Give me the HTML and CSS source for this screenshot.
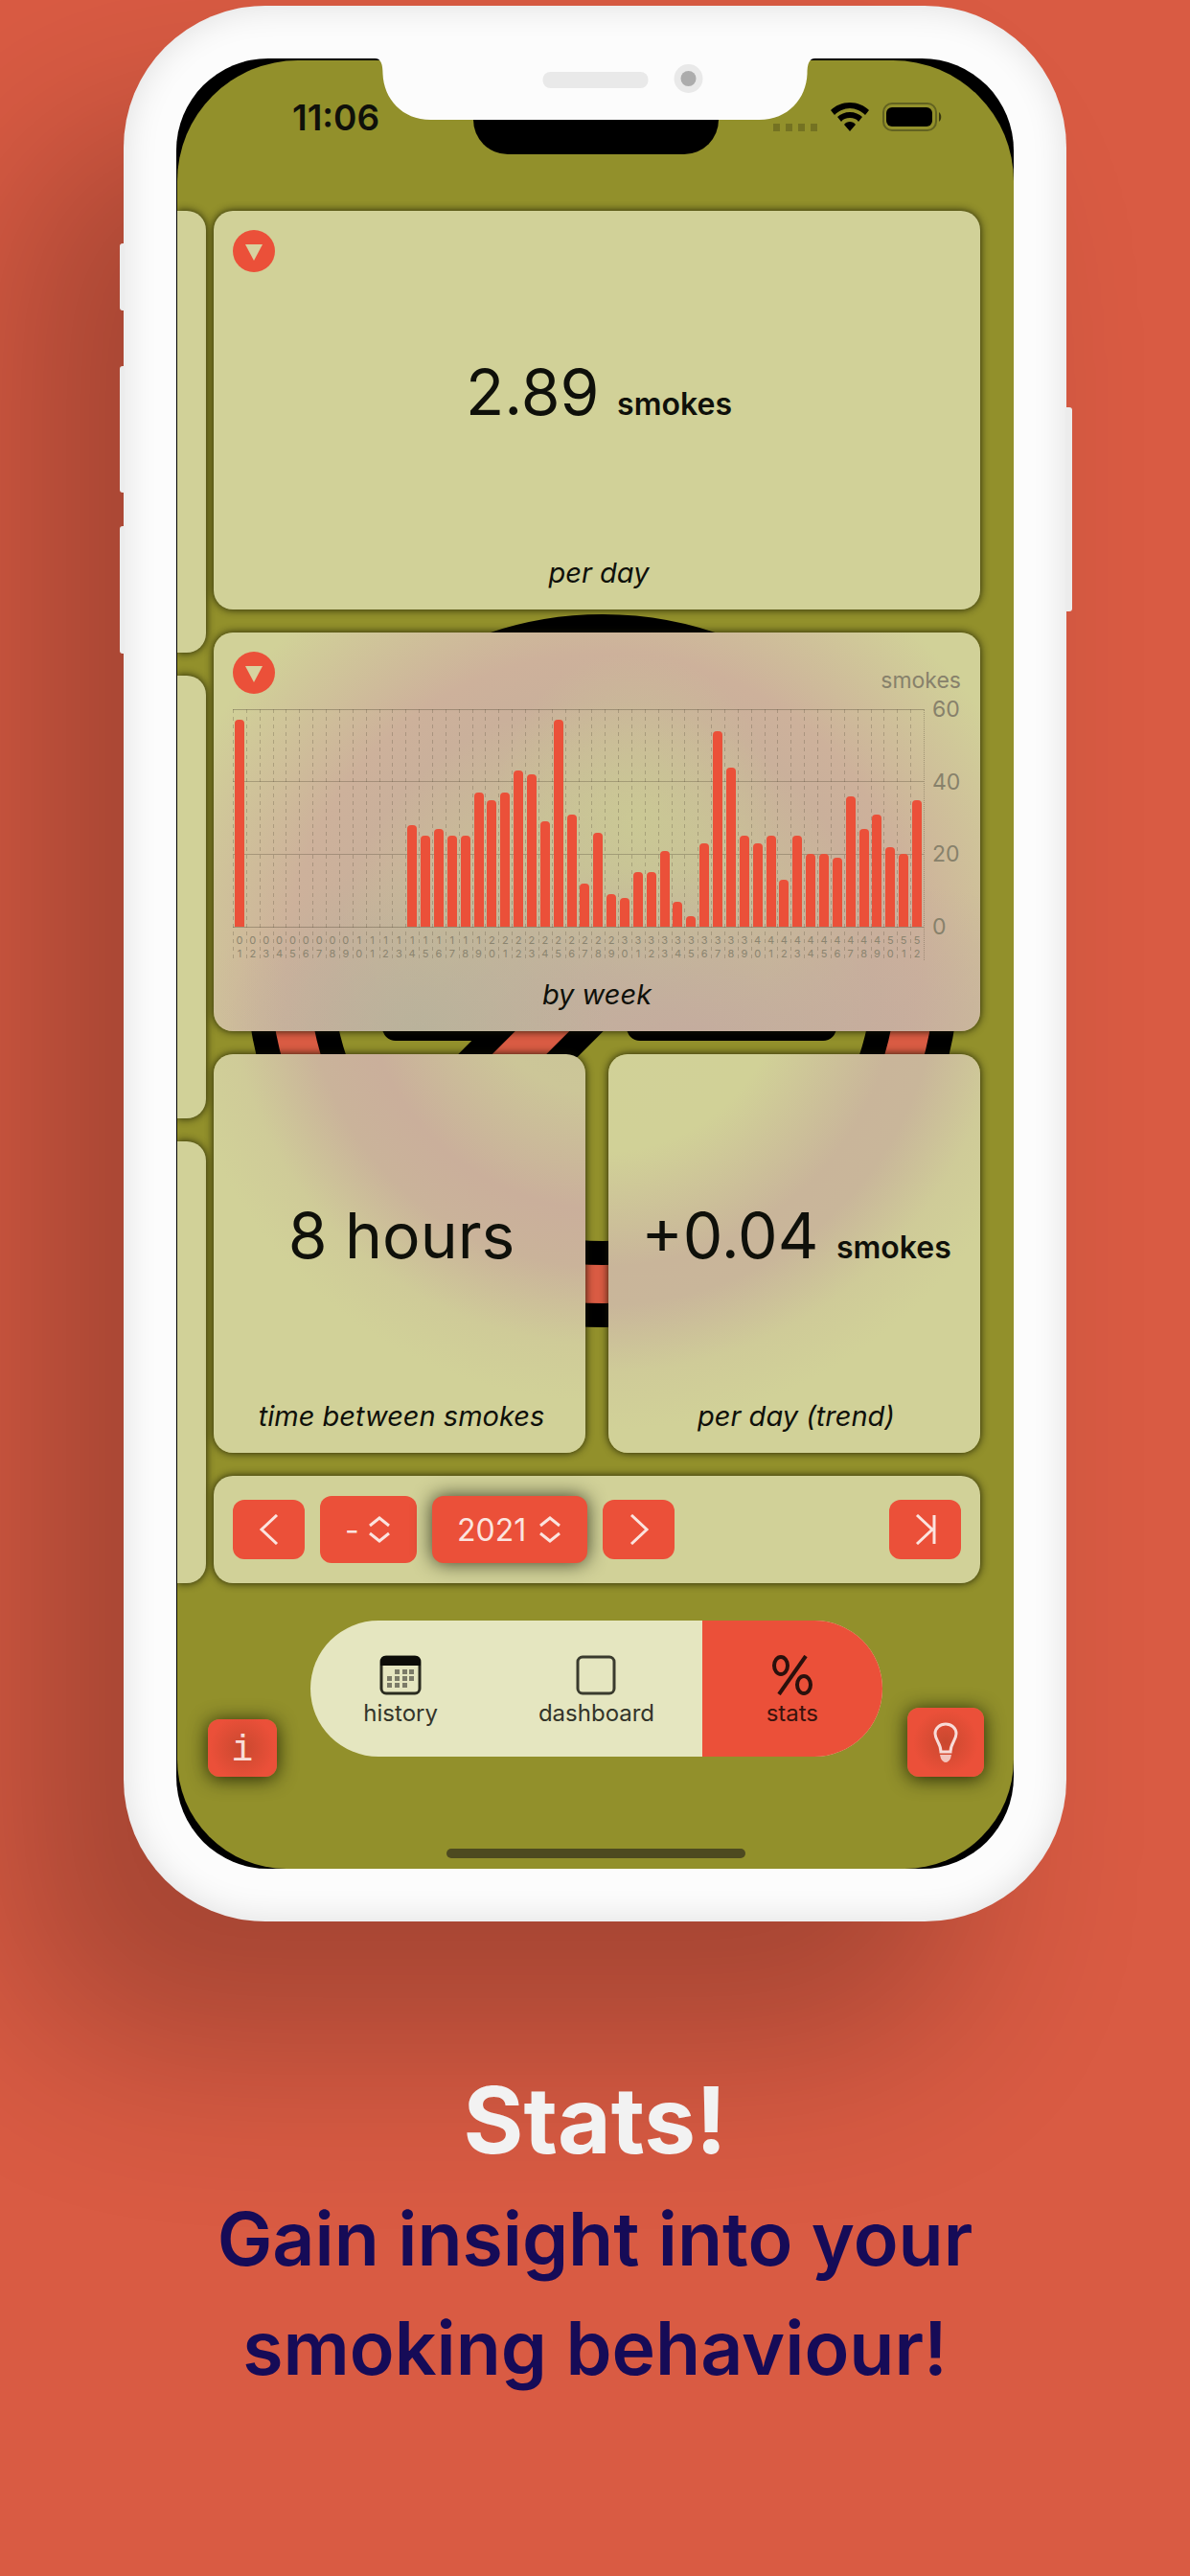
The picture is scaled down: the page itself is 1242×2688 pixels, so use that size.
FILE: index.html
```html
<!DOCTYPE html>
<html lang="en">
<head>
<meta charset="utf-8">
<meta name="viewport" content="width=device-width, initial-scale=1">
<title>Stats</title>
<link rel="stylesheet" href="styles.css">
</head>
<body>
<main class="page">
  <div class="phone">
    <span class="key key-mute"></span>
    <span class="key key-up"></span>
    <span class="key key-down"></span>
    <span class="key key-power"></span>
    <div class="bezel">
      <div class="screen">
        <svg class="sign" viewBox="0 0 744 744" aria-hidden="true">
          <rect x="142" y="360" width="200" height="85" rx="14" fill="#000"/>
          <rect x="397" y="360" width="219" height="85" rx="14" fill="#000"/>
          <g fill="none">
            <path d="M142 602L602 142" stroke="#000" stroke-width="90"/>
            <circle cx="372" cy="372" r="327" stroke="#000" stroke-width="90"/>
            <circle cx="372" cy="372" r="327" stroke="#d95b43" stroke-width="40"/>
            <path d="M142 602L602 142" stroke="#d95b43" stroke-width="40"/>
          </g>
        </svg>

        <header class="status">
          <time class="clock">11:06</time>
          <div class="signals">
            <svg width="46" height="8" viewBox="0 0 46 8" class="cell" aria-hidden="true"><path d="M0 0h7v8H0zM13 0h7v8h-7zM26 0h7v8h-7zM39 0h7v8h-7z"/></svg>
            <svg width="40" height="30" viewBox="0 0 40 30" class="wifi" aria-hidden="true"><path d="M20 0C12 0 5 3 0 8l4 5c4-4 10-7 16-7s12 3 16 7l4-5C35 3 28 0 20 0zM20 10c-5 0-10 2-13 5l4 5c2-3 5-4 9-4s7 1 9 4l4-5c-3-3-8-5-13-5zM20 20c-2 0-5 1-6 3l6 7 6-7c-1-2-4-3-6-3z"/></svg>
            <svg width="62" height="30" viewBox="0 0 62 30" aria-hidden="true"><rect x="1" y="1" width="55" height="28" rx="9" fill="none" stroke="#4f4e1c" stroke-width="2" opacity=".7"/><rect x="4" y="5" width="48" height="20" rx="6"/><path d="M59 10c3 2 3 8 0 10z" opacity=".6"/></svg>
          </div>
        </header>

        <div class="board">
          <div class="prev-page" aria-hidden="true"><div></div><div></div><div></div></div>
          <div class="cards">
            <section class="card wide">
              <button class="disclose" aria-label="Options"><svg viewBox="0 0 44 44"><path d="M13 15h18L22 32z"/></svg></button>
              <p class="value">2.89 <small>smokes</small></p>
              <h2 class="caption">per day</h2>
            </section>

            <section class="card wide weekly">
              <div class="chart-head">
                <button class="disclose" aria-label="Options"><svg viewBox="0 0 44 44"><path d="M13 15h18L22 32z"/></svg></button>
                <span class="unit">smokes</span>
              </div>
              <div class="chart">
                <ol class="bars">
                  <li style="--v:57"><b></b><span>01</span></li>
                  <li style="--v:0"><b></b><span>02</span></li>
                  <li style="--v:0"><b></b><span>03</span></li>
                  <li style="--v:0"><b></b><span>04</span></li>
                  <li style="--v:0"><b></b><span>05</span></li>
                  <li style="--v:0"><b></b><span>06</span></li>
                  <li style="--v:0"><b></b><span>07</span></li>
                  <li style="--v:0"><b></b><span>08</span></li>
                  <li style="--v:0"><b></b><span>09</span></li>
                  <li style="--v:0"><b></b><span>10</span></li>
                  <li style="--v:0"><b></b><span>11</span></li>
                  <li style="--v:0"><b></b><span>12</span></li>
                  <li style="--v:0"><b></b><span>13</span></li>
                  <li style="--v:28"><b></b><span>14</span></li>
                  <li style="--v:25"><b></b><span>15</span></li>
                  <li style="--v:27"><b></b><span>16</span></li>
                  <li style="--v:25"><b></b><span>17</span></li>
                  <li style="--v:25"><b></b><span>18</span></li>
                  <li style="--v:37"><b></b><span>19</span></li>
                  <li style="--v:35"><b></b><span>20</span></li>
                  <li style="--v:37"><b></b><span>21</span></li>
                  <li style="--v:43"><b></b><span>22</span></li>
                  <li style="--v:42"><b></b><span>23</span></li>
                  <li style="--v:29"><b></b><span>24</span></li>
                  <li style="--v:57"><b></b><span>25</span></li>
                  <li style="--v:31"><b></b><span>26</span></li>
                  <li style="--v:12"><b></b><span>27</span></li>
                  <li style="--v:26"><b></b><span>28</span></li>
                  <li style="--v:9"><b></b><span>29</span></li>
                  <li style="--v:8"><b></b><span>30</span></li>
                  <li style="--v:15"><b></b><span>31</span></li>
                  <li style="--v:15"><b></b><span>32</span></li>
                  <li style="--v:21"><b></b><span>33</span></li>
                  <li style="--v:7"><b></b><span>34</span></li>
                  <li style="--v:3"><b></b><span>35</span></li>
                  <li style="--v:23"><b></b><span>36</span></li>
                  <li style="--v:54"><b></b><span>37</span></li>
                  <li style="--v:44"><b></b><span>38</span></li>
                  <li style="--v:25"><b></b><span>39</span></li>
                  <li style="--v:23"><b></b><span>40</span></li>
                  <li style="--v:25"><b></b><span>41</span></li>
                  <li style="--v:13"><b></b><span>42</span></li>
                  <li style="--v:25"><b></b><span>43</span></li>
                  <li style="--v:20"><b></b><span>44</span></li>
                  <li style="--v:20"><b></b><span>45</span></li>
                  <li style="--v:19"><b></b><span>46</span></li>
                  <li style="--v:36"><b></b><span>47</span></li>
                  <li style="--v:27"><b></b><span>48</span></li>
                  <li style="--v:31"><b></b><span>49</span></li>
                  <li style="--v:22"><b></b><span>50</span></li>
                  <li style="--v:20"><b></b><span>51</span></li>
                  <li style="--v:35"><b></b><span>52</span></li>
                </ol>
                <div class="axis"><span>60</span><span>40</span><span>20</span><span>0</span></div>
              </div>
              <h2 class="caption">by week</h2>
            </section>

            <section class="card between">
              <p class="value">8 hours</p>
              <h2 class="caption">time between smokes</h2>
            </section>
            <section class="card trend">
              <p class="value">+0.04 <small>smokes</small></p>
              <h2 class="caption">per day (trend)</h2>
            </section>

            <form class="period wide">
              <button type="button" class="step" aria-label="Previous"><svg viewBox="0 0 32 32"><path d="M24 1L8 16l16 15"/></svg></button>
              <label class="pick pick-month"><select aria-label="Month"><option>-</option></select><svg viewBox="0 0 24 28"><path d="M2 10l10-8 10 8M2 18l10 8 10-8"/></svg></label>
              <label class="pick pick-year"><select aria-label="Year"><option>2021</option></select><svg viewBox="0 0 24 28"><path d="M2 10l10-8 10 8M2 18l10 8 10-8"/></svg></label>
              <button type="button" class="step" aria-label="Next"><svg viewBox="0 0 32 32"><path d="M8 1l16 15L8 31"/></svg></button>
              <button type="button" class="step last" aria-label="Latest"><svg viewBox="0 0 32 32"><path d="M7 1l16 15L7 31M25 1v30"/></svg></button>
            </form>
          </div>
        </div>

        <div class="dock">
          <button class="float info" aria-label="Information">i</button>
          <nav class="tabs">
            <a href="#history">
              <svg width="44" height="42" viewBox="0 0 44 42"><rect x="2" y="2" width="40" height="38" rx="5" fill="none" stroke="#2b2c20" stroke-width="3"/><path d="M1 11V6a5 5 0 015-5h32a5 5 0 015 5v5z" fill="#0c0c08"/><g fill="#7b7b68"><path d="M16 15h5v5h-5zM24 15h5v5h-5zM31 15h5v5h-5zM8 22h5v5H8zM16 22h5v5h-5zM24 22h5v5h-5zM31 22h5v5h-5zM8 29h5v5H8zM16 29h5v5h-5zM24 29h5v5h-5z"/></g></svg>
              <span>history</span>
            </a>
            <a href="#dashboard">
              <svg width="44" height="42" viewBox="0 0 44 42"><rect x="3" y="2" width="38" height="38" rx="5" fill="none" stroke="#3a3b2e" stroke-width="3"/></svg>
              <span>dashboard</span>
            </a>
            <a href="#stats" class="current" aria-current="page">
              <svg width="44" height="42" viewBox="0 0 44 42" fill="none" stroke="#2a100c" stroke-width="4"><ellipse cx="10" cy="11" rx="7" ry="9"/><ellipse cx="34" cy="31" rx="7" ry="9"/><path d="M36 1L8 41"/></svg>
              <span>stats</span>
            </a>
          </nav>
          <button class="float tip" aria-label="Tips"><svg width="26" height="42" viewBox="0 0 26 42"><path d="M8 31C8 22 2 19 2 12a11 10 0 0122 0c0 7-6 10-6 19z" fill="none" stroke="#f8dcd8" stroke-width="3"/><path d="M7 34h12l-1 4c-1 2-3 4-5 4s-4-2-5-4z" fill="#f3c4bd"/></svg></button>
        </div>
        <div class="home"></div>

        <div class="island"></div>
      </div>
      <svg class="notch" width="459" height="64" viewBox="0 0 459 64" aria-hidden="true">
        <path d="M0 0C6 0 8 6 8 16C9 42 28 64 58 64H401C431 64 450 42 451 16C451 6 453 0 459 0z" fill="#fcfcfc"/>
        <rect x="175" y="14" width="110" height="17" rx="8" fill="#e9e9e9"/>
        <circle cx="327" cy="21" r="15" fill="#e9e9e9"/><circle cx="327" cy="21" r="8" fill="#acacac"/>
      </svg>
    </div>
  </div>

  <div class="pitch">
    <h1>Stats!</h1>
    <p>Gain insight into your smoking behaviour!</p>
  </div>
</main>
</body>
</html>
```
FILE: styles.css
```css
:root {
  --coral: #d95b43;
  --red: #eb5039;
  --olive: #92902b;
  --cream: #d1d198;
  --edge: 0 0 8px rgba(20, 20, 0, .9);
}

* { box-sizing: border-box; }

body {
  margin: 0;
  background: var(--coral);
  color: #0f100a;
  font-family: Inter, "Liberation Sans", sans-serif;
}

h1, h2, p, ol { margin: 0; padding: 0; }

button, select {
  margin: 0;
  padding: 0;
  border: 0;
  font: inherit;
  color: inherit;
}

.page {
  min-height: 100vh;
  padding: 6px 20px 0;
  overflow: hidden;
}

/* Handset */

.phone {
  position: relative;
  width: 100%;
  max-width: 984px;
  margin: 0 auto;
  padding: 55px;
  border-radius: 148px;
  background: #fcfcfc;
  box-shadow:
    inset 0 0 36px rgba(0, 0, 0, .12),
    -110px 130px 190px rgba(0, 0, 0, .24);
}

.key {
  position: absolute;
  left: -4px;
  width: 5px;
  border-radius: 3px 0 0 3px;
  background: #ececec;
}

.key-mute { top: 248px; height: 70px; }
.key-up { top: 376px; height: 132px; }
.key-down { top: 543px; height: 133px; }

.key-power {
  top: 419px;
  right: -6px;
  left: auto;
  width: 7px;
  height: 213px;
  border-radius: 0 3px 3px 0;
}

.bezel {
  position: relative;
  padding: 2px 0 0 1px;
  border-radius: 96px;
  background: #000;
  overflow: hidden;
}

.screen {
  position: relative;
  z-index: 0;
  border-radius: 126px 126px 114px 114px;
  background: var(--olive);
  overflow: hidden;
}

.notch {
  position: absolute;
  top: 0;
  left: 50%;
  transform: translateX(-50%);
}

.island {
  position: absolute;
  top: 0;
  left: 50%;
  width: 256px;
  height: 98px;
  transform: translateX(-50%);
  border-radius: 0 0 36px 36px;
  background: #000;
}

.sign {
  position: absolute;
  z-index: -1;
  top: 578px;
  left: 72px;
  width: 744px;
}

/* Status bar */

.status {
  display: flex;
  justify-content: space-between;
  height: 157px;
  padding: 38px 75px 0 120px;
}

.clock {
  font-size: 37px;
  font-weight: 600;
  line-height: 44px;
}

.signals {
  display: flex;
  align-items: flex-end;
  gap: 14px;
  height: 36px;
}

.cell { opacity: .2; }

/* Cards */

.board {
  display: flex;
  gap: 8px;
  padding-right: 35px;
}

.prev-page {
  display: flex;
  flex: 0 0 30px;
  flex-direction: column;
  gap: 24px;
}

.prev-page div {
  flex: 1;
  border-radius: 0 20px 20px 0;
  background: var(--cream);
  box-shadow: var(--edge);
}

.cards {
  display: grid;
  flex: 1;
  grid-template-columns: 1fr 1fr;
  gap: 24px;
}

.wide { grid-column: 1 / -1; }

.card {
  display: grid;
  grid-template-rows: 1fr auto;
  min-height: 416px;
  padding: 20px 16px 18px 20px;
  border-radius: 20px;
  background: var(--cream);
  box-shadow: var(--edge);
}

.weekly {
  display: block;
  padding-right: 20px;
  background:
    radial-gradient(ellipse 200px 180px at 27% 100%, rgba(184, 178, 155, .9), rgba(184, 178, 155, 0)),
    radial-gradient(ellipse 560px 170px at 62% 100%, rgba(196, 172, 158, 1), rgba(196, 172, 158, 0)),
    radial-gradient(ellipse 150px 180px at 440px 200px, rgba(203, 203, 148, .8), rgba(203, 203, 148, 0)),
    radial-gradient(circle at 406px 352px, #bfb79b 0, #c8bd98 170px, #cab09b 280px, #cdb19b 330px, #d1d198 480px);
}

.between { background: radial-gradient(circle at 406px -88px, #c8c398 0, #ccc698 130px, #caaf9b 250px, #cab39a 310px, #cfcb98 390px, #d1d198 450px); }
.trend { background: radial-gradient(circle at -6px -88px, #d1d198 0, #d1d197 190px, #c9b59a 310px, #c9b69a 350px, #cfcb98 420px, #d1d198 480px); }

.disclose {
  grid-area: 1 / 1;
  align-self: start;
  justify-self: start;
  width: 44px;
  height: 44px;
  border-radius: 50%;
  background: var(--red);
}

.disclose svg {
  display: block;
  fill: #d8d3a0;
}

.value {
  grid-area: 1 / 1;
  align-self: center;
  font-size: 66px;
  line-height: 80px;
  text-align: center;
  white-space: nowrap;
}

.value small {
  font-size: 32px;
  font-weight: 600;
  line-height: 32px;
}

.caption {
  font-size: 29px;
  font-style: italic;
  font-weight: 400;
  line-height: 40px;
  text-align: center;
}

/* Weekly chart */

.chart-head {
  display: flex;
  align-items: flex-end;
  justify-content: space-between;
  height: 44px;
}

.unit, .axis {
  color: #87816b;
  font-size: 23px;
  line-height: 28px;
}

.chart {
  display: flex;
  height: 278px;
  margin-bottom: 16px;
  padding-top: 16px;
}

.bars {
  display: grid;
  flex: 1;
  grid-template-columns: repeat(52, minmax(0, 1fr));
  height: 262px;
  border-right: 1px dotted rgba(90, 80, 60, .4);
  background:
    linear-gradient(rgba(90, 80, 60, .4), rgba(90, 80, 60, .4)) 0 0 / 100% 1px no-repeat,
    linear-gradient(rgba(90, 80, 60, .35), rgba(90, 80, 60, .35)) 0 75px / 100% 1px no-repeat,
    linear-gradient(rgba(90, 80, 60, .35), rgba(90, 80, 60, .35)) 0 151px / 100% 1px no-repeat,
    linear-gradient(rgba(90, 80, 60, .4), rgba(90, 80, 60, .4)) 0 227px / 100% 1px no-repeat;
  list-style: none;
}

.bars li {
  display: flex;
  flex-direction: column;
  align-items: center;
  justify-content: flex-end;
  background: repeating-linear-gradient(rgba(90, 80, 60, .3) 0 4px, transparent 4px 8px) 0 0 / 1px 100% no-repeat;
}

.bars b {
  width: 10px;
  height: calc(var(--v) * 227px / 60);
  border-radius: 4px 4px 0 0;
  background: var(--red);
}

.bars span {
  width: 8px;
  height: 35px;
  padding-top: 7px;
  color: #8b846f;
  font-size: 11px;
  line-height: 14px;
  text-align: center;
  word-break: break-all;
}

.axis {
  display: flex;
  flex-direction: column;
  justify-content: space-between;
  width: 38px;
  height: 255px;
  margin-top: -14px;
  padding-left: 8px;
}

/* Period picker */

.period {
  display: flex;
  align-items: center;
  gap: 16px;
  height: 112px;
  padding: 0 20px;
  border-radius: 20px;
  background: var(--cream);
  box-shadow: var(--edge);
}

.step {
  display: grid;
  flex: 0 0 75px;
  place-items: center;
  height: 62px;
  border-radius: 12px;
  background: var(--red);
}

.step svg {
  width: 32px;
  height: 32px;
}

.step svg, .pick svg {
  fill: none;
  stroke: #fbe4df;
  stroke-width: 3;
}

.last { margin-left: auto; }

.pick {
  display: grid;
  align-items: center;
  height: 70px;
  border-radius: 12px;
  background: var(--red);
}

.pick select {
  grid-area: 1 / 1;
  width: 100%;
  height: 70px;
  padding-left: 26px;
  appearance: none;
  background: none;
  color: #fbe4df;
  font-size: 32px;
}

.pick svg {
  grid-area: 1 / 1;
  justify-self: end;
  width: 24px;
  height: 28px;
  margin-right: 27px;
  pointer-events: none;
}

.pick-month { width: 101px; }

.pick-year {
  width: 162px;
  box-shadow: 0 0 20px rgba(20, 25, 10, .8);
}

/* Bottom navigation */

.dock {
  display: flex;
  align-items: flex-end;
  padding: 39px 31px 0 32px;
}

.tabs {
  display: grid;
  flex: 1;
  grid-template-columns: 188fr 220fr 188fr;
  height: 142px;
  margin: 0 26px 21px 35px;
  border-radius: 71px;
  background: #e5e6c0;
  overflow: hidden;
}

.tabs a {
  display: flex;
  flex-direction: column;
  align-items: center;
  gap: 4px;
  padding-top: 36px;
  color: #33342a;
  font-size: 24px;
  line-height: 30px;
  text-decoration: none;
}

.tabs .current {
  background: var(--red);
  color: #3a130d;
}

.float {
  display: grid;
  place-items: center;
  border-radius: 12px;
  background: radial-gradient(circle, #c9482f 0, var(--red) 34px);
  box-shadow: 0 2px 20px rgba(15, 20, 0, .85);
  color: #f9ddd8;
}

.info {
  width: 72px;
  height: 60px;
  padding-top: 4px;
  font-family: "Liberation Mono", monospace;
  font-size: 38px;
}

.tip {
  width: 80px;
  height: 72px;
}

.home {
  width: 312px;
  height: 10px;
  margin: 75px auto 11px;
  border-radius: 5px;
  background: #4d4a20;
}

/* Marketing copy */

.pitch {
  position: relative;
  max-width: 860px;
  margin: 0 auto;
  padding: 140px 0 130px;
  font-weight: 600;
  text-align: center;
}

.pitch h1 {
  color: #f2f2f2;
  font-size: 96px;
  font-weight: 700;
  line-height: 134px;
}

.pitch p {
  color: #160b57;
  font-size: 77px;
  line-height: 114px;
}
```
